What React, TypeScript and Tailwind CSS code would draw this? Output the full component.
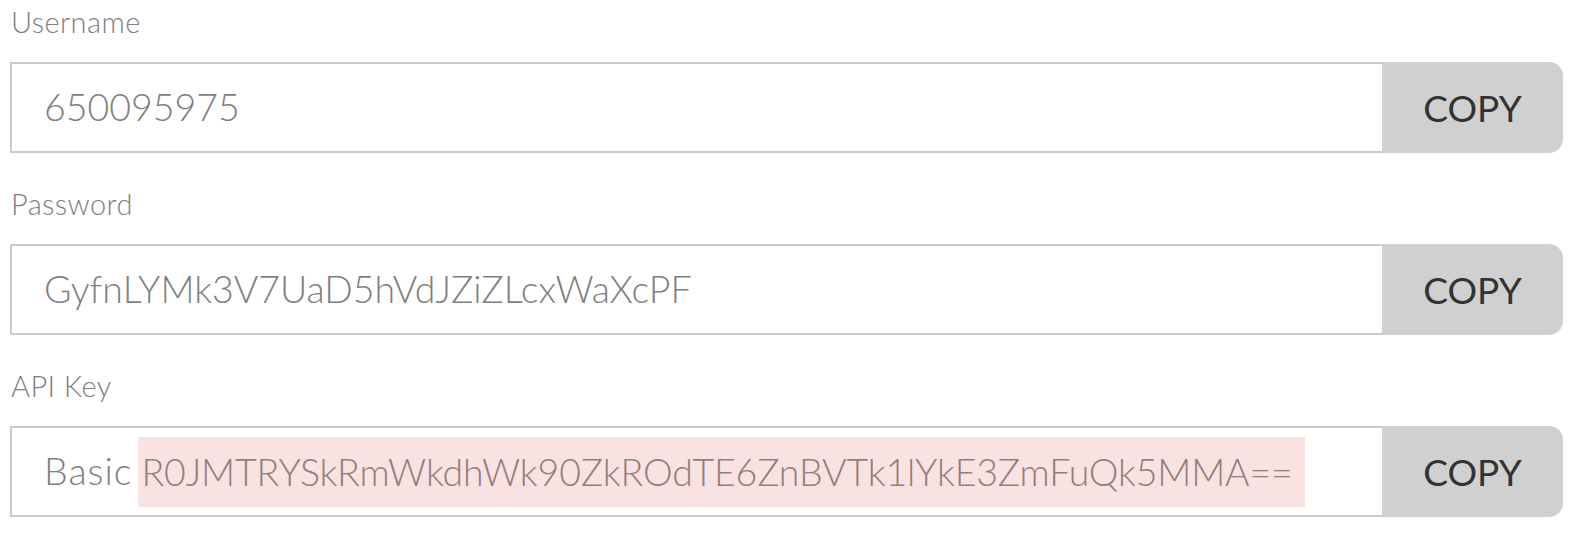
import React from "react";

const fields = [
  { label: "Username", value: "650095975" },
  { label: "Password", value: "GyfnLYMk3V7UaD5hVdJZiZLcxWaXcPF" },
  { label: "API Key", value: "R0JMTRYSkRmWkdhWk90ZkROdTE6ZnBVTk1lYkE3ZmFuQk5MMA==", prefix: "Basic" },
];

export default function App() {
  return (
    <div
      className="w-[1580px] h-[538px] bg-white pl-[10px] pt-[4px] flex flex-col gap-[33px]"
      style={{ fontFamily: "Lato, 'Open Sans', sans-serif" }}
    >
      {fields.map((f) => (
        <div key={f.label} className="flex flex-col w-[1553px]">
          <div className="h-[36px] leading-[36px] text-[29px] tracking-[0.4px] font-light text-[#808080] pl-[1px] mb-[22px]">
            {f.label}
          </div>
          <div className="flex h-[91px]">
            <div className="flex-1 flex items-center border-2 border-r-0 border-[#cbcbcb] bg-white pl-[32px] text-[37.5px] font-light text-[#7f7f7f] whitespace-nowrap">
              {f.prefix ? (
                <>
                  <span className="tracking-[1px]">{f.prefix}</span>
                  <span className="inline-block ml-[5px] h-[70px] leading-[70px] bg-[#f8e2e2] text-[#947d7a] tracking-[-0.15px] pl-[4px] pr-[12px]">
                    {f.value}
                  </span>
                </>
              ) : (
                <span>{f.value}</span>
              )}
            </div>
            <button className="w-[181px] h-[91px] bg-[#d0d0d0] rounded-r-[14px] text-[37px] text-[#333333] flex items-center justify-center">
              COPY
            </button>
          </div>
        </div>
      ))}
    </div>
  );
}
